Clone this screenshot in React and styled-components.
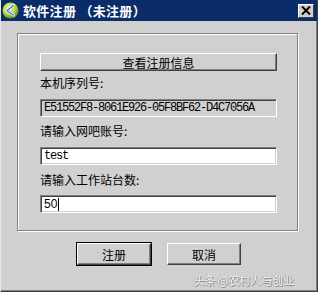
import React from "react";
import styled, { createGlobalStyle } from "styled-components";

const GlobalStyle = createGlobalStyle`
  html, body {
    margin: 0;
    padding: 0;
    background: #d0d0d0;
  }
  body {
    font-family: "Noto Sans CJK SC", "Liberation Sans", sans-serif;
  }
`;

const Window = styled.div`
  width: 318px;
  height: 292px;
  box-sizing: border-box;
  background: #d0d0d0;
  border-left: 1px solid #e6e6e6;
  border-right: 1px solid #404040;
  border-bottom: 1px solid #404040;
  box-shadow: inset -1px -1px 0 #808080;
  display: flex;
  flex-direction: column;
`;

const TitleBar = styled.div`
  height: 21px;
  background: #0a2c68;
  display: flex;
  align-items: center;
  padding: 0 3px 0 1px;
`;

const TitleText = styled.span`
  margin-left: 4px;
  color: #fff;
  font-weight: 700;
  font-size: 13px;
  line-height: 21px;
  letter-spacing: 0.3px;
  flex: 1;
`;

const CloseBtn = styled.div`
  width: 16px;
  height: 14px;
  box-sizing: border-box;
  background: #d0d0d0;
  border: 1px solid;
  border-color: #fff #404040 #404040 #fff;
  display: flex;
  align-items: center;
  justify-content: center;
`;

const Body = styled.div`
  flex: 1;
  display: flex;
  flex-direction: column;
  padding: 12px 19px 0 16px;
`;

const GroupBox = styled.div`
  border: 1px solid #808080;
  box-shadow: inset 1px 1px 0 #fff, 1px 1px 0 #fff;
  padding: 19px 20px 17px 22px;
  display: flex;
  flex-direction: column;
`;

const RaisedButton = styled.div`
  box-sizing: border-box;
  height: ${(p) => p.$h || 18}px;
  width: ${(p) => (p.$w ? p.$w + "px" : "auto")};
  margin-top: ${(p) => p.$mt || 0}px;
  background: #d0d0d0;
  border: 1px solid;
  border-color: #fff #404040 #404040 #fff;
  box-shadow: inset -1px -1px 0 #808080;
  outline: ${(p) => (p.$default ? "1px solid #000" : "none")};
  display: flex;
  align-items: center;
  justify-content: center;
  font-size: 12px;
  color: #000;
`;

const Label = styled.div`
  margin-top: ${(p) => p.$mt}px;
  font-size: 12px;
  line-height: 16px;
  color: #000;
`;

const Field = styled.div`
  margin-top: ${(p) => p.$mt}px;
  height: 18px;
  box-sizing: border-box;
  background: ${(p) => (p.$disabled ? "#d0d0d0" : "#fff")};
  border: 1px solid;
  border-color: #808080 #fff #fff #808080;
  box-shadow: inset 1px 1px 0 #404040, inset -1px -1px 0 #d0d0d0;
  padding: 0 3px;
  display: flex;
  align-items: center;
  color: #000;
`;

const MonoText = styled.span`
  font-family: "Liberation Mono", monospace;
  font-size: 12px;
  letter-spacing: -1.2px;
`;

const SansText = styled.span`
  font-family: "Liberation Sans", sans-serif;
  font-size: 12px;
`;

const Caret = styled.span`
  display: inline-block;
  width: 1px;
  height: 13px;
  margin-left: 1px;
  background: #000;
`;

const ButtonRow = styled.div`
  margin-top: 12px;
  display: flex;
  justify-content: center;
  gap: 16px;
  padding-left: 3px;
`;

const Footer = styled.div`
  margin-top: auto;
  padding: 0 4px 4px 0;
  text-align: right;
  font-size: 11px;
  line-height: 14px;
  color: #f2f2f2;
  text-shadow: 1px 1px 0 #8a8a8a, -1px 0 0 #a8a8a8;
`;

const AppIcon = () => (
  <svg width="17" height="17" viewBox="0 0 17 17">
    <defs>
      <radialGradient id="g" cx="40%" cy="35%" r="65%">
        <stop offset="0" stopColor="#f6f7a8" />
        <stop offset="0.6" stopColor="#b8d44a" />
        <stop offset="1" stopColor="#5f8f1c" />
      </radialGradient>
    </defs>
    <circle cx="8.5" cy="8.5" r="8" fill="url(#g)" />
    <path d="M11.5 3.5 L5 8.8 L11.8 13.2" fill="none" stroke="#fff" strokeWidth="2.6" strokeLinecap="round" />
    <path d="M11.5 3.5 L5 8.8 L11.8 13.2" fill="none" stroke="#2a6ad0" strokeWidth="1.1" strokeLinecap="round" />
  </svg>
);

const CloseIcon = () => (
  <svg width="10" height="9" viewBox="0 0 10 9">
    <path d="M1 0.5 L9 8.5 M9 0.5 L1 8.5" stroke="#000" strokeWidth="2" />
  </svg>
);

export default function App() {
  return (
    <>
      <GlobalStyle />
      <Window>
        <TitleBar>
          <AppIcon />
          <TitleText>软件注册 （未注册）</TitleText>
          <CloseBtn>
            <CloseIcon />
          </CloseBtn>
        </TitleBar>
        <Body>
          <GroupBox>
            <RaisedButton $h={18}>查看注册信息</RaisedButton>
            <Label $mt={4}>本机序列号:</Label>
            <Field $mt={8} $disabled>
              <MonoText>E51552F8-8061E926-05F8BF62-D4C7056A</MonoText>
            </Field>
            <Label $mt={6}>请输入网吧账号:</Label>
            <Field $mt={8}>
              <MonoText>test</MonoText>
            </Field>
            <Label $mt={7}>请输入工作站台数:</Label>
            <Field $mt={7}>
              <SansText>50</SansText>
              <Caret />
            </Field>
          </GroupBox>
          <ButtonRow>
            <RaisedButton $w={74} $h={22} $default>注册</RaisedButton>
            <RaisedButton $w={74} $h={22}>取消</RaisedButton>
          </ButtonRow>
          <Footer>头条 @农村人与创业</Footer>
        </Body>
      </Window>
    </>
  );
}
